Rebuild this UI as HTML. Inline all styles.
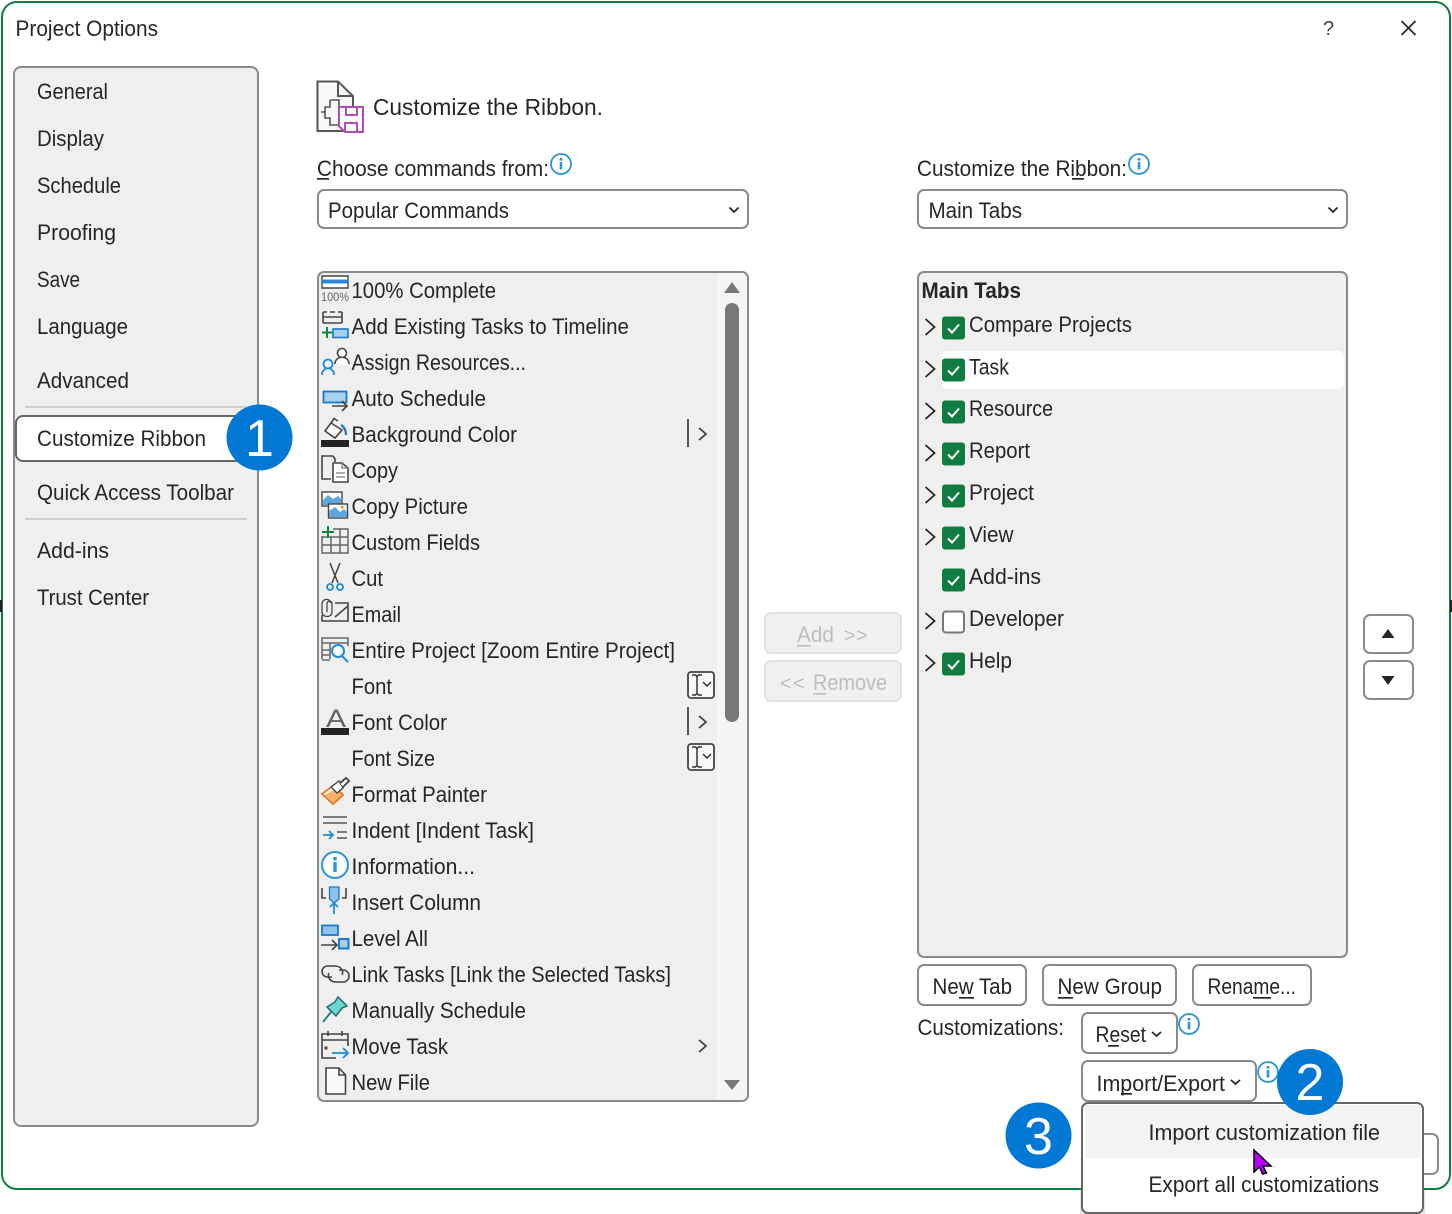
<!DOCTYPE html>
<html><head><meta charset="utf-8"><title>Project Options</title>
<style>
html,body{margin:0;padding:0;background:#fff;width:1452px;height:1214px;overflow:hidden}
svg{display:block}
text{font-family:"Liberation Sans",sans-serif;font-size:22px;fill:#262626}
.i{fill:none;stroke:#444;stroke-width:1.6}
.b{fill:none;stroke:#1f8ad6;stroke-width:1.8}
.box{fill:#fff;stroke:#8a8a8a;stroke-width:2}
.info{fill:#fff;stroke:#2b95d8;stroke-width:1.8}
.chk{fill:#107c41}
.tick{fill:none;stroke:#fff;stroke-width:2}
.chev{fill:none;stroke:#262626;stroke-width:1.8}
</style></head><body>
<svg width="1452" height="1214" viewBox="0 0 1452 1214" xmlns="http://www.w3.org/2000/svg">
<rect x="2" y="2" width="1448" height="1187" rx="15" fill="#fff" stroke="#107c41" stroke-width="2"/>
<rect x="0" y="600" width="2" height="12" fill="#222"/><rect x="1450" y="600" width="2" height="12" fill="#222"/>

<text x="15.500" y="36" textLength="142.500" lengthAdjust="spacingAndGlyphs">Project Options</text>
<text x="1323" y="35" style="font-size:20px;fill:#444">?</text>
<path d="M1401.500 21L1415.500 35M1415.500 21L1401.500 35" fill="none" stroke="#262626" stroke-width="1.700"/>

<!-- left nav -->
<rect x="14" y="67" width="244" height="1059" rx="7" fill="#efefef" stroke="#8a8a8a" stroke-width="2"/>
<text x="37" y="99" textLength="71" lengthAdjust="spacingAndGlyphs">General</text>
<text x="37" y="146" textLength="67" lengthAdjust="spacingAndGlyphs">Display</text>
<text x="37" y="193" textLength="84" lengthAdjust="spacingAndGlyphs">Schedule</text>
<text x="37" y="240" textLength="79" lengthAdjust="spacingAndGlyphs">Proofing</text>
<text x="37" y="287" textLength="43" lengthAdjust="spacingAndGlyphs">Save</text>
<text x="37" y="334" textLength="91" lengthAdjust="spacingAndGlyphs">Language</text>
<text x="37" y="388" textLength="92" lengthAdjust="spacingAndGlyphs">Advanced</text>
<rect x="25" y="406" width="222" height="2" fill="#cfcfcf"/>
<rect x="16" y="416" width="240" height="45" rx="7" fill="#fff" stroke="#666" stroke-width="2"/>
<text x="37" y="446" textLength="169" lengthAdjust="spacingAndGlyphs">Customize Ribbon</text>
<text x="37" y="500" textLength="197" lengthAdjust="spacingAndGlyphs">Quick Access Toolbar</text>
<rect x="25" y="518" width="222" height="2" fill="#cfcfcf"/>
<text x="37" y="558" textLength="72" lengthAdjust="spacingAndGlyphs">Add-ins</text>
<text x="37" y="605" textLength="112" lengthAdjust="spacingAndGlyphs">Trust Center</text>
<circle cx="259.500" cy="437.500" r="33" fill="#0078d4"/>
<text x="259.500" y="456" text-anchor="middle" style="font-size:52px;fill:#fff">1</text>

<!-- header -->
<path d="M317.500 81.500H338L353 96V109H339V126L344 131H317.500Z" fill="#f8f8f8" stroke="#555" stroke-width="2"/>
<path d="M338 82V96H353" fill="none" stroke="#555" stroke-width="2"/>
<path d="M330 100H339V108M330 100V107H325V118H330V125H339M325 112H321" fill="none" stroke="#555" stroke-width="1.600"/>
<path d="M339 107H363V132H345L339 126Z" fill="#fff" stroke="#b14cb8" stroke-width="2"/>
<path d="M346 107V115H357V107M345 132V123H357V132" fill="none" stroke="#b14cb8" stroke-width="2"/>
<text x="373" y="115" textLength="230" lengthAdjust="spacingAndGlyphs" style="font-size:23px">Customize the Ribbon.</text>

<text x="317" y="176" textLength="232" lengthAdjust="spacingAndGlyphs">Choose commands from:</text>
<rect x="317" y="178" width="12" height="1.700" fill="#262626"/>
<g><circle cx="561" cy="164" r="10" class="info"/><rect x="559.700" y="162" width="2.600" height="7.500" fill="#2b95d8"/><rect x="559.700" y="158" width="2.600" height="2.600" fill="#2b95d8"/></g>
<text x="917" y="176" textLength="210" lengthAdjust="spacingAndGlyphs">Customize the Ribbon:</text>
<rect x="1072" y="178" width="12" height="1.700" fill="#262626"/>
<g><circle cx="1139" cy="164" r="10" class="info"/><rect x="1137.700" y="162" width="2.600" height="7.500" fill="#2b95d8"/><rect x="1137.700" y="158" width="2.600" height="2.600" fill="#2b95d8"/></g>

<rect x="318" y="190" width="430" height="38" rx="6" class="box"/>
<text x="328" y="218" textLength="181" lengthAdjust="spacingAndGlyphs">Popular Commands</text>
<path d="M729.500 207.500L734 212L738.500 207.500" class="chev"/>
<rect x="918" y="190" width="429" height="38" rx="6" class="box"/>
<text x="928.500" y="218" textLength="93.500" lengthAdjust="spacingAndGlyphs">Main Tabs</text>
<path d="M1328.500 207.500L1333 212L1337.500 207.500" class="chev"/>

<!-- commands list -->
<rect x="318" y="272" width="430" height="829" rx="6" fill="#efefef" stroke="#8a8a8a" stroke-width="2"/>
<path d="M717 273H741Q747 273 747 279V1094Q747 1100 741 1100H717Z" fill="#f5f5f5"/>
<rect x="725" y="303" width="14" height="419" rx="7" fill="#787878"/>
<path d="M732 282L740 293H724Z" fill="#787878"/>
<path d="M724 1080H740L732 1090Z" fill="#787878"/>

<text x="351.500" y="298" textLength="144.500" lengthAdjust="spacingAndGlyphs">100% Complete</text>
<text x="351.500" y="334" textLength="277.500" lengthAdjust="spacingAndGlyphs">Add Existing Tasks to Timeline</text>
<text x="351.500" y="370" textLength="174.500" lengthAdjust="spacingAndGlyphs">Assign Resources...</text>
<text x="351.500" y="406" textLength="134.500" lengthAdjust="spacingAndGlyphs">Auto Schedule</text>
<text x="351.500" y="442" textLength="165.500" lengthAdjust="spacingAndGlyphs">Background Color</text>
<text x="351.500" y="478" textLength="46.500" lengthAdjust="spacingAndGlyphs">Copy</text>
<text x="351.500" y="514" textLength="116.500" lengthAdjust="spacingAndGlyphs">Copy Picture</text>
<text x="351.500" y="550" textLength="128.500" lengthAdjust="spacingAndGlyphs">Custom Fields</text>
<text x="351.500" y="586" textLength="31.500" lengthAdjust="spacingAndGlyphs">Cut</text>
<text x="351.500" y="622" textLength="49.500" lengthAdjust="spacingAndGlyphs">Email</text>
<text x="351.500" y="658" textLength="323.500" lengthAdjust="spacingAndGlyphs">Entire Project [Zoom Entire Project]</text>
<text x="351.500" y="694" textLength="40.500" lengthAdjust="spacingAndGlyphs">Font</text>
<text x="351.500" y="730" textLength="95.500" lengthAdjust="spacingAndGlyphs">Font Color</text>
<text x="351.500" y="766" textLength="83.500" lengthAdjust="spacingAndGlyphs">Font Size</text>
<text x="351.500" y="802" textLength="135.500" lengthAdjust="spacingAndGlyphs">Format Painter</text>
<text x="351.500" y="838" textLength="182.500" lengthAdjust="spacingAndGlyphs">Indent [Indent Task]</text>
<text x="351.500" y="874" textLength="123.500" lengthAdjust="spacingAndGlyphs">Information...</text>
<text x="351.500" y="910" textLength="129.500" lengthAdjust="spacingAndGlyphs">Insert Column</text>
<text x="351.500" y="946" textLength="76.500" lengthAdjust="spacingAndGlyphs">Level All</text>
<text x="351.500" y="982" textLength="319.500" lengthAdjust="spacingAndGlyphs">Link Tasks [Link the Selected Tasks]</text>
<text x="351.500" y="1018" textLength="174.500" lengthAdjust="spacingAndGlyphs">Manually Schedule</text>
<text x="351.500" y="1054" textLength="96.500" lengthAdjust="spacingAndGlyphs">Move Task</text>
<text x="351.500" y="1090" textLength="78.500" lengthAdjust="spacingAndGlyphs">New File</text>

<!-- submenu marks -->
<g fill="none" stroke="#444" stroke-width="1.800">
<path d="M688 419V447M699 428L706 434L699 440"/>
<path d="M688 707V735M699 716L706 722L699 728"/>
<path d="M699 1040L706 1046L699 1052"/>
</g>
<g fill="#f8f8f8" stroke="#444" stroke-width="1.800">
<rect x="688" y="672" width="26" height="26" rx="3"/>
<rect x="688" y="744" width="26" height="26" rx="3"/>
</g>
<g fill="none" stroke="#333" stroke-width="1.500">
<path d="M692 675H695.500L697 676.500L698.500 675H702M697 676.500V693.500M692 695H695.500L697 693.500L698.500 695H702M703 682L707 686L711 682"/>
<path d="M692 747H695.500L697 748.500L698.500 747H702M697 748.500V765.500M692 767H695.500L697 765.500L698.500 767H702M703 754L707 758L711 754"/>
</g>

<!-- list icons -->
<g>
<!-- 100% -->
<path d="M322 276H348V288H322Z" fill="#fff" stroke="#444" stroke-width="1.400"/>
<rect x="322" y="279.500" width="26" height="4" fill="#2b88d8"/>
<text x="321" y="301" textLength="28" lengthAdjust="spacingAndGlyphs" style="font-size:12px;fill:#666">100%</text>
<!-- add existing -->
<path d="M323 312H327M330 312H335M338 312H342M323 317H342M323 323H342M323 312V323M342 312V323" class="i"/>
<path d="M327 327V338M322 332.500H333" stroke="#10893e" stroke-width="2" fill="none"/>
<rect x="333" y="329" width="15" height="8.500" fill="#a6d0ee" stroke="#1b77c9" stroke-width="1.600"/>
<!-- assign -->
<circle cx="342" cy="353" r="4.500" fill="#fff" stroke="#444" stroke-width="1.600"/>
<path d="M335 364C335 355 349 355 349 364" fill="#fff" stroke="#444" stroke-width="1.600"/>
<circle cx="328" cy="364" r="4.500" class="b" style="fill:#efefef"/>
<path d="M322 375C322 366 334 366 334 375" class="b" style="fill:#efefef"/>
<!-- auto schedule -->
<rect x="323.500" y="391.500" width="23" height="11" fill="#a6d0ee" stroke="#1b77c9" stroke-width="1.800"/>
<path d="M332 406H347M342 401L347 406L342 411" class="i"/>
<!-- background -->
<rect x="321" y="440" width="28" height="7" fill="#222"/>
<path d="M331 423L342 430L335 438L325 431Z" fill="#fff" stroke="#444" stroke-width="1.600"/>
<path d="M331 423L334 418.500L338 421" class="i"/><path d="M341 425Q346 428 346 435" fill="none" stroke="#1b77c9" stroke-width="2.200"/>
<!-- copy -->
<path d="M331 479H322V456H333L335 459V462" class="i"/>
<path d="M333 463H342L348 468V482H333Z" fill="#fff" stroke="#444" stroke-width="1.600"/>
<path d="M342 463V468H348M336 473H345M336 477H345" fill="none" stroke="#777" stroke-width="1.200"/>
<!-- copy picture -->
<rect x="322" y="492" width="20" height="14" fill="#fff" stroke="#444" stroke-width="1.400"/>
<path d="M323 500L328 495L333 499L338 496L341 499V505H323Z" fill="#5ba7de"/>
<rect x="328.500" y="504" width="19" height="14" fill="#fff" stroke="#444" stroke-width="1.400"/>
<path d="M329 517V511L335 507L340 512L344 509L347 512V517Z" fill="#5ba7de"/>
<rect x="341" y="506" width="2.500" height="2.500" fill="#e8832a"/>
<!-- custom fields -->
<path d="M322 536V553H348V529H333M322 545H348M322 537H348M331 537V553M340 529V553" fill="none" stroke="#666" stroke-width="1.500"/>
<path d="M328 526V538M322 532H334" stroke="#10893e" stroke-width="2" fill="none"/>
<!-- cut -->
<path d="M330 563L338 583M340 563L332 583" fill="none" stroke="#444" stroke-width="1.500"/>
<circle cx="330" cy="587" r="3" class="b"/><circle cx="340" cy="587" r="3" class="b"/>
<!-- email -->
<path d="M335 603H348V621H322V615" class="i"/>
<path d="M335 617L348 606" class="i"/>
<path d="M327 612V604C327 600 332 600 332 604V612C332 618 322 618 322 612V604C322 598 331 598 330 603" fill="none" stroke="#444" stroke-width="1.300"/>
<!-- entire project -->
<path d="M322 659V638H348V646M322 643H348M322 650H330M322 655H330M330 643V659M322 660H330" fill="none" stroke="#666" stroke-width="1.500"/>
<circle cx="338" cy="651" r="6" fill="#fff" stroke="#1f8ad6" stroke-width="2"/>
<path d="M342 656L348 662" stroke="#1f8ad6" stroke-width="2"/>
<!-- font color -->
<text x="326" y="727" textLength="20" lengthAdjust="spacingAndGlyphs" style="font-size:25px;fill:#666">A</text>
<rect x="321" y="728" width="28" height="7" fill="#222"/>
<!-- format painter -->
<path d="M322 794L334 785L343 795L333 804Z" fill="#fff" stroke="#e8731a" stroke-width="1.800"/>
<path d="M324.500 795L336 789L342 795L333 803Z" fill="#f7b26a"/>
<path d="M331 787L339 781L343 788L337 793Z" fill="#fff" stroke="#444" stroke-width="1.400"/>
<path d="M340 783L346 778L349 781L343 787" fill="#fff" stroke="#444" stroke-width="1.800"/>
<!-- indent -->
<path d="M323 817H347M323 823H347M337 832H347M337 838H347" fill="none" stroke="#555" stroke-width="1.600"/>
<path d="M323 835H333M329 831L333 835L329 839" fill="none" stroke="#1f8ad6" stroke-width="1.800"/>
<!-- info -->
<circle cx="335" cy="865" r="13" fill="#fff" stroke="#2b95d8" stroke-width="2"/>
<rect x="333.300" y="862" width="3.400" height="10" fill="#2b95d8"/><rect x="333.300" y="857" width="3.400" height="3.400" fill="#2b95d8"/>
<!-- insert column -->
<path d="M329.500 887H339V899L334 903L329.500 899Z" fill="#8dc2ea" stroke="#1b77c9" stroke-width="1.300"/>
<path d="M322 888V898H326M346 888V898H342" class="i"/>
<path d="M334 914V904M330 907L334 903L338 907" fill="none" stroke="#1f8ad6" stroke-width="1.800"/>
<!-- level all -->
<rect x="322" y="925.500" width="16" height="9.500" fill="#8dc2ea" stroke="#1b77c9" stroke-width="1.800"/>
<path d="M321 945H337M332 940L337 945L332 950" class="i"/>
<rect x="339" y="939" width="9.500" height="9.500" fill="#a6d0ee" stroke="#1b77c9" stroke-width="2"/>
<!-- link -->
<path d="M332 977H328C320 977 320 966 328 966H335C341 966 344 971 342 975" class="i"/>
<path d="M339 970H343C351 970 351 982 343 982H336C330 982 327 977 329 973" class="i"/>
<!-- pin -->
<path d="M338 997L347 1006L342 1008L336 1016L327 1007L335 1002Z" fill="#6fd6d2" stroke="#1f6f6c" stroke-width="1.500"/>
<path d="M331 1012L323 1022" stroke="#1f6f6c" stroke-width="1.800"/>
<!-- move task -->
<path d="M336 1058H322V1034H348V1046M322 1040H348M328 1031V1036M342 1031V1036" fill="none" stroke="#444" stroke-width="1.600"/>
<rect x="324.500" y="1046.500" width="3" height="3" fill="#444"/>
<path d="M332 1053H348M343 1048L348 1053L343 1058" fill="none" stroke="#1f8ad6" stroke-width="1.800"/>
<!-- new file -->
<path d="M326 1068H339L345.500 1075V1094H326Z" fill="#fafafa" stroke="#444" stroke-width="1.600"/>
<path d="M339 1068V1075H345.500" class="i"/>
</g>

<!-- Add/Remove -->
<rect x="765" y="613" width="136" height="40" rx="6" fill="#f0f0f0" stroke="#e2e2e2" stroke-width="2"/>
<text x="797" y="642" textLength="37" lengthAdjust="spacingAndGlyphs" style="fill:#bdbdbd">Add</text>
<text x="844" y="642" style="fill:#bdbdbd;font-size:20px">&gt;</text>
<text x="856" y="642" style="fill:#bdbdbd;font-size:20px">&gt;</text>
<rect x="797" y="645" width="14" height="1.600" fill="#bdbdbd"/>
<rect x="765" y="661" width="136" height="40" rx="6" fill="#f0f0f0" stroke="#e2e2e2" stroke-width="2"/>
<text x="780" y="690" style="fill:#bdbdbd;font-size:20px">&lt;</text>
<text x="793" y="690" style="fill:#bdbdbd;font-size:20px">&lt;</text>
<text x="813" y="690" textLength="74" lengthAdjust="spacingAndGlyphs" style="fill:#bdbdbd">Remove</text>
<rect x="813" y="693" width="13" height="1.600" fill="#bdbdbd"/>

<!-- right list -->
<rect x="918" y="272" width="429" height="685" rx="6" fill="#efefef" stroke="#8a8a8a" stroke-width="2"/>
<rect x="942" y="351" width="402" height="38" rx="6" fill="#fff"/>
<text x="921.500" y="298" textLength="99.500" lengthAdjust="spacingAndGlyphs" style="font-weight:bold">Main Tabs</text>
<text x="969" y="332" textLength="163" lengthAdjust="spacingAndGlyphs">Compare Projects</text>
<text x="969" y="374.500" textLength="40" lengthAdjust="spacingAndGlyphs">Task</text>
<text x="969" y="416" textLength="84" lengthAdjust="spacingAndGlyphs">Resource</text>
<text x="969" y="458" textLength="61" lengthAdjust="spacingAndGlyphs">Report</text>
<text x="969" y="500" textLength="65" lengthAdjust="spacingAndGlyphs">Project</text>
<text x="969" y="542" textLength="44.500" lengthAdjust="spacingAndGlyphs">View</text>
<text x="969" y="584" textLength="72" lengthAdjust="spacingAndGlyphs">Add-ins</text>
<text x="969" y="626" textLength="95" lengthAdjust="spacingAndGlyphs">Developer</text>
<text x="969" y="668" textLength="43" lengthAdjust="spacingAndGlyphs">Help</text>
<g fill="none" stroke="#262626" stroke-width="1.800">
<path d="M925.500 319L934.500 327L925.500 335M925.500 361L934.500 369L925.500 377M925.500 403L934.500 411L925.500 419M925.500 445L934.500 453L925.500 461M925.500 487L934.500 495L925.500 503M925.500 529L934.500 537L925.500 545M925.500 613L934.500 621L925.500 629M925.500 655L934.500 663L925.500 671"/>
</g>
<g class="chk">
<rect x="942" y="316.500" width="23" height="23" rx="3"/><rect x="942" y="358.500" width="23" height="23" rx="3"/><rect x="942" y="400.500" width="23" height="23" rx="3"/><rect x="942" y="442.500" width="23" height="23" rx="3"/><rect x="942" y="484.500" width="23" height="23" rx="3"/><rect x="942" y="526.500" width="23" height="23" rx="3"/><rect x="942" y="568.500" width="23" height="23" rx="3"/><rect x="942" y="652.500" width="23" height="23" rx="3"/>
</g>
<path class="tick" d="M948 328.500L952 332.500L959 324.500M948 370.500L952 374.500L959 366.500M948 412.500L952 416.500L959 408.500M948 454.500L952 458.500L959 450.500M948 496.500L952 500.500L959 492.500M948 538.500L952 542.500L959 534.500M948 580.500L952 584.500L959 576.500M948 664.500L952 668.500L959 660.500"/>
<rect x="943" y="611.500" width="21" height="21" rx="3" fill="#fff" stroke="#777" stroke-width="2"/>

<!-- up/down -->
<rect x="1364" y="615" width="49" height="38" rx="6" class="box"/>
<path d="M1388 629L1394.500 638H1381.500Z" fill="#262626"/>
<rect x="1364" y="661" width="49" height="38" rx="6" class="box"/>
<path d="M1381.500 676H1394.500L1388 685Z" fill="#262626"/>

<!-- bottom buttons -->
<rect x="918" y="965" width="108" height="40" rx="6" class="box"/>
<text x="932.500" y="994" textLength="79.500" lengthAdjust="spacingAndGlyphs">New Tab</text>
<rect x="959" y="997" width="15" height="1.700" fill="#262626"/>
<rect x="1043" y="965" width="133" height="40" rx="6" class="box"/>
<text x="1057.500" y="994" textLength="104.500" lengthAdjust="spacingAndGlyphs">New Group</text>
<rect x="1058" y="997" width="15" height="1.700" fill="#262626"/>
<rect x="1193" y="965" width="118" height="40" rx="6" class="box"/>
<text x="1207.500" y="994" textLength="88.500" lengthAdjust="spacingAndGlyphs">Rename...</text>
<rect x="1253" y="997" width="18" height="1.700" fill="#262626"/>

<text x="917.500" y="1035" textLength="146.500" lengthAdjust="spacingAndGlyphs">Customizations:</text>
<rect x="1082" y="1013" width="95" height="40" rx="6" class="box"/>
<text x="1095.500" y="1042" textLength="50.500" lengthAdjust="spacingAndGlyphs">Reset</text>
<rect x="1108" y="1045" width="11" height="1.700" fill="#262626"/>
<path d="M1152 1032L1156.500 1036L1161 1032" class="chev"/>
<g><circle cx="1189" cy="1024" r="10" class="info"/><rect x="1187.700" y="1022" width="2.600" height="7.500" fill="#2b95d8"/><rect x="1187.700" y="1018" width="2.600" height="2.600" fill="#2b95d8"/></g>

<rect x="1082" y="1061" width="174" height="40" rx="6" class="box"/>
<text x="1096.500" y="1091" textLength="128.500" lengthAdjust="spacingAndGlyphs">Import/Export</text>
<rect x="1121" y="1093" width="11" height="1.700" fill="#262626"/>
<path d="M1231 1080L1235.500 1084L1240 1080" class="chev"/>
<g><circle cx="1268" cy="1072" r="10" class="info"/><rect x="1266.700" y="1070" width="2.600" height="7.500" fill="#2b95d8"/><rect x="1266.700" y="1066" width="2.600" height="2.600" fill="#2b95d8"/></g>

<!-- button behind menu -->
<rect x="1400" y="1134" width="38" height="40" rx="6" class="box"/>

<!-- menu -->
<rect x="1080" y="1190" width="345" height="24" fill="#e4e4e4"/>
<rect x="1082" y="1103" width="341" height="110" rx="6" fill="#fff" stroke="#666" stroke-width="2"/>
<rect x="1085" y="1105" width="336" height="53" fill="#f3f3f3"/>
<text x="1148.500" y="1140" textLength="231.500" lengthAdjust="spacingAndGlyphs">Import customization file</text>
<text x="1148.500" y="1192" textLength="230.500" lengthAdjust="spacingAndGlyphs">Export all customizations</text>

<circle cx="1310" cy="1082" r="33" fill="#0078d4"/>
<text x="1310" y="1100" text-anchor="middle" style="font-size:52px;fill:#fff">2</text>
<circle cx="1038.500" cy="1135.500" r="33" fill="#0078d4"/>
<text x="1038.500" y="1154" text-anchor="middle" style="font-size:52px;fill:#fff">3</text>

<!-- cursor -->
<path d="M1254 1150L1271 1166L1263 1166L1266.500 1173L1262.500 1174L1259.500 1167L1254 1172Z" fill="#b400ff" stroke="#000" stroke-width="1.500"/>
</svg>
</body></html>
